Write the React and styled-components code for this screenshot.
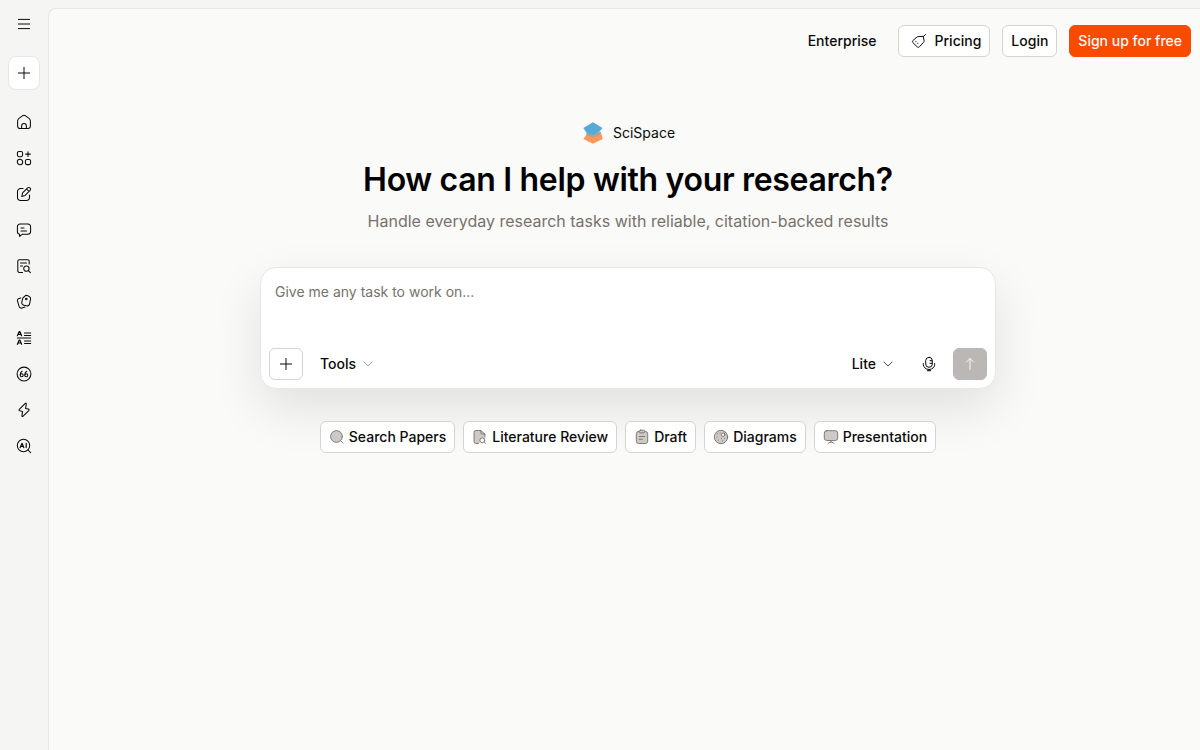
import React from 'react'
import styled, { createGlobalStyle } from 'styled-components'

const GlobalStyle = createGlobalStyle`
	* {
		box-sizing: border-box;
	}
	body {
		margin: 0;
		font-family: Inter, 'Liberation Sans', sans-serif;
		font-size: 14px;
		line-height: 20px;
		color: #0c0a09;
		background: #f5f5f4;
	}
	button {
		font: inherit;
		color: inherit;
		cursor: pointer;
	}
	svg {
		display: block;
		flex: none;
	}
`

const Page = styled.div`
	display: flex;
	height: 100vh;
	overflow: hidden;
`

const Sidebar = styled.nav`
	display: flex;
	flex-direction: column;
	align-items: center;
	width: 48px;
	flex: none;
	padding-top: 8px;
`

const NavButton = styled.button`
	display: flex;
	justify-content: center;
	align-items: center;
	width: 32px;
	height: 32px;
	margin-bottom: 4px;
	padding: 0;
	border: none;
	border-radius: 8px;
	background: transparent;
`

const NewButton = styled(NavButton)`
	height: 34px;
	margin: 12px 0 16px;
	border: 1px solid #e5e7eb;
	background: #fff;
`

const Main = styled.main`
	display: flex;
	flex-direction: column;
	flex: 1;
	margin-top: 8px;
	border: 1px solid #e5e7eb;
	border-width: 1px 0 0 1px;
	border-top-left-radius: 8px;
	background: #fafaf9;
`

const Header = styled.header`
	display: flex;
	justify-content: flex-end;
	align-items: center;
	gap: 12px;
	padding: 16px 9px 0 0;
`

const Button = styled.button`
	display: flex;
	justify-content: center;
	align-items: center;
	gap: ${props => props.$gap || '8px'};
	height: 32px;
	padding: 0 8px;
	border: 1px solid #d6d3d1;
	border-radius: 6px;
	background: #fff;
	font-weight: 500;
	white-space: nowrap;
`

const PlainButton = styled(Button)`
	border-color: transparent;
	background: transparent;
`

const PricingButton = styled(Button)`
	padding-left: 12px;
`

const SignUpButton = styled(Button)`
	border-color: #f84b00;
	background: #f84b00;
	color: #fafaf9;
`

const Hero = styled.section`
	display: flex;
	flex-direction: column;
	align-items: center;
	padding: 64px 0 0 7px;
`

const Brand = styled.div`
	display: flex;
	align-items: center;
	gap: 8px;
	height: 24px;
`

const Title = styled.h1`
	margin: 15px 0 0;
	font-size: 32px;
	line-height: 40px;
	font-weight: 600;
	letter-spacing: -0.01em;
	color: #000;
`

const Subtitle = styled.p`
	margin: 9px 0 0;
	font-size: 16px;
	line-height: 24px;
	color: #78716c;
`

const Prompt = styled.div`
	display: flex;
	flex-direction: column;
	justify-content: space-between;
	width: 736px;
	height: 122px;
	margin-top: 34px;
	padding: 14px 8px 8px;
	border: 1px solid #e5e7eb;
	border-radius: 16px;
	background: #fff;
	box-shadow: 0 20px 50px rgba(0, 0, 0, 0.1);
`

const Placeholder = styled.div`
	padding: 0 6px;
	color: #78716c;
`

const Toolbar = styled.div`
	display: flex;
	align-items: center;
`

const SquareButton = styled(Button)`
	width: 34px;
	padding: 0;
`

const ToolsButton = styled(PlainButton)`
	margin-left: 8px;
`

const VoiceButton = styled(PlainButton)`
	margin: 0 7px;
`

const SubmitButton = styled(SquareButton)`
	border-color: #bbb7b5;
	background: #bbb7b5;
	color: #fafaf9;
`

const Spacer = styled.div`
	flex: 1;
`

const Chips = styled.div`
	display: flex;
	gap: 8px;
	margin-top: 32px;
`

const Icon = ({ size = 16, children, ...rest }) => (
	<svg
		width={size}
		height={size}
		viewBox="0 0 16 16"
		fill="none"
		stroke="currentColor"
		strokeWidth="1"
		strokeLinecap="round"
		strokeLinejoin="round"
		{...rest}
	>
		{children}
	</svg>
)

const ChipIcon = ({ children }) => (
	<Icon stroke="#78716c" strokeWidth="0.9" fill="#cdc9c6">
		{children}
	</Icon>
)

const PlusIcon = () => (
	<Icon>
		<path d="M8 2.4v11.2M2.4 8h11.2" />
	</Icon>
)

const ChevronIcon = ({ color }) => (
	<Icon stroke={color}>
		<path d="m4 6 4 4 4-4" />
	</Icon>
)

const navItems = [
	{
		name: 'Home',
		icon: (
			<>
				<path d="M1.600 7c0-1.200.5-2 1.400-2.700l3.400-2.500c1-.7 2.200-.7 3.200 0L13 4.300c.9.700 1.400 1.500 1.400 2.700v5c0 1.500-1 2.500-2.500 2.500H4.100c-1.500 0-2.500-1-2.500-2.500z" />
				<path d="M5.600 14.400v-2.500a2.400 2.400 0 0 1 4.800 0v2.500" />
			</>
		)
	},
	{
		name: 'Apps',
		icon: (
			<>
				<rect x="1.400" y="1.500" width="5.200" height="5.200" rx="1.600" />
				<circle cx="4" cy="12" r="2.700" />
				<rect x="9.400" y="9.400" width="5.200" height="5.200" rx="1.600" />
				<path d="M12 1.700v4.800M9.600 4.100h4.800" />
			</>
		)
	},
	{
		name: 'Write',
		icon: (
			<>
				<path d="M7 2.500H4.700a3.200 3.200 0 0 0-3.200 3.200v5.600a3.200 3.200 0 0 0 3.200 3.200h5.600a3.200 3.200 0 0 0 3.200-3.200V9" />
				<path d="m6.600 6.900 5-5a1.600 1.600 0 0 1 2.300 0l.2.200a1.600 1.600 0 0 1 0 2.300l-5 5-3.300 1.100zM10.600 3l2.400 2.400" />
			</>
		)
	},
	{
		name: 'Chat',
		icon: (
			<>
				<path d="M4 2h8a2.600 2.600 0 0 1 2.600 2.600v5A2.600 2.600 0 0 1 12 12.200H6.600L3.600 14.400v-2.200A2.500 2.500 0 0 1 1.400 9.600v-5A2.600 2.600 0 0 1 4 2z" />
				<path d="M5 6h3M5 9h5.500" />
			</>
		)
	},
	{
		name: 'Papers',
		icon: (
			<>
				<path d="M6.500 14.400H3.300a1.500 1.500 0 0 1-1.500-1.500V3.200a1.500 1.500 0 0 1 1.500-1.500h8.400a1.500 1.500 0 0 1 1.500 1.500V6" />
				<path d="M4.500 5h6M4.500 8h2" />
				<circle cx="10.400" cy="10.600" r="2.700" />
				<path d="m12.400 12.600 2 2" />
			</>
		)
	},
	{
		name: 'Library',
		icon: (
			<>
				<path d="M9.100 1.900c.7-.6 1.500-.7 2.300-.3l1.700.8c1.100.5 1.700 1.400 1.500 2.500l-1 4.900a2.600 2.600 0 0 1-3.100 2l-2.700-.6a2.600 2.600 0 0 1-2-3.100l1-3.900z" />
				<path d="M4.700 3.900 3 4.400a2.200 2.200 0 0 0-1.500 2.800l1.600 5.200a2.300 2.300 0 0 0 2.900 1.600l3-.9" />
				<circle cx="10.300" cy="5" r=".8" />
			</>
		)
	},
	{
		name: 'Glossary',
		icon: (
			<>
				<path d="m1.400 5.700 1.800-4.200h.6l1.800 4.200M2.200 4.400h2.600M1.400 14.300l1.800-4.200h.6l1.800 4.200M2.200 13h2.600" strokeWidth="1.200" />
				<path d="M8.500 3h6.200M8.500 5.500h6.200M1.300 8h13.400M8.500 10.900h6.200M8.500 13.400h6.200" />
			</>
		)
	},
	{
		name: 'Citations',
		icon: (
			<>
				<circle cx="8" cy="8" r="6.900" />
				<circle cx="5.700" cy="9.200" r="1.500" />
				<circle cx="10.300" cy="9.200" r="1.500" />
				<path d="M4.200 8.900c.1-1.700.8-3 1.900-3.600M8.800 8.900c.1-1.700.8-3 1.900-3.600" />
			</>
		)
	},
	{
		name: 'Automations',
		icon: (
			<path d="M9.300 1.400 3.300 7.300c-.6.600-.3 1.300.5 1.500l2.800.6-.7 4.400c-.1.800.4 1 1 .5l5.900-5.700c.6-.6.3-1.300-.5-1.500l-2.700-.6.700-4.600c.1-.8-.4-1-1-.5z" />
		)
	},
	{
		name: 'AI Detector',
		icon: (
			<>
				<circle cx="7.500" cy="7.500" r="6.200" />
				<path d="m12 12 2.700 2.700" />
				<path d="m4.200 9.600 1.700-4.200h.2l1.700 4.200M4.900 8.400h2.200M10.200 5.400v4.200" strokeWidth="1.200" />
			</>
		)
	}
]

const chips = [
	{
		label: 'Search Papers',
		icon: (
			<>
				<circle cx="7.500" cy="7.500" r="5.900" />
				<path d="m12 12 2.200 2.200" />
			</>
		)
	},
	{
		label: 'Literature Review',
		icon: (
			<>
				<path d="M6.800 14.500H4a2 2 0 0 1-2-2v-9a2 2 0 0 1 2-2h4.800L13 5.200v5z" stroke="none" />
				<path d="M6.500 14.500H4a2 2 0 0 1-2-2v-9a2 2 0 0 1 2-2h4.800L13 5.200v2.600" fill="none" />
				<path d="M8.800 1.600v2.200c0 .8.500 1.300 1.200 1.300h2.800" fill="none" />
				<circle cx="10.300" cy="11.300" r="2.400" fill="#fff" />
				<path d="m12.200 13.100 1.400 1.300" />
			</>
		)
	},
	{
		label: 'Draft',
		icon: (
			<>
				<rect x="2.300" y="2.500" width="11.400" height="12" rx="2.200" />
				<rect x="5.300" y="1.200" width="5.400" height="2.600" rx="1.200" />
				<path d="M5.300 7.500h5.400M5.300 10.300h3" />
			</>
		)
	},
	{
		label: 'Diagrams',
		icon: (
			<>
				<circle cx="8" cy="8" r="6.700" />
				<circle cx="10.100" cy="5.700" r="1.700" fill="#fff" />
				<path d="m11.400 4.400 1.200-1.200M4.500 4.800h.1M7 4.200h.1M4 8h.1M5.200 11h.1M8.300 9.500h.1M11.700 9.500h.1M9.500 12h.1" />
			</>
		)
	},
	{
		label: 'Presentation',
		icon: (
			<>
				<rect x="1.300" y="1.700" width="13.400" height="9.800" rx="2.400" />
				<path d="M8 11.500v1.700M5.200 14.300l2-1.100h1.600l2 1.100" fill="none" />
			</>
		)
	}
]

const Logo = () => (
	<svg width="24" height="24" viewBox="0 0 24 24">
		<defs>
			<linearGradient id="fold" x1="0.200" y1="0" x2="0.500" y2="1">
				<stop offset="0" stopColor="#6fa8c4" />
				<stop offset="1" stopColor="#e09b70" />
			</linearGradient>
		</defs>
		<path d="M20 11.300 21.700 18 12 22.800 2.400 18l3.300-4.700z" fill="#ff9857" />
		<path d="M12 1.200 21.500 6.900 18.300 10.800 12 14.500 6 12.500 2.300 7z" fill="#55abd6" />
		<path d="M5.600 11.500 12 14.300l6.300-3.600 1.700.6-2 3-6 3.200-6.400-3.300z" fill="url(#fold)" />
	</svg>
)

const App = () => {
	return (
		<>
			<GlobalStyle />
			<Page>
				<Sidebar>
					<NavButton aria-label="Menu">
						<Icon>
							<path d="M2.400 3.400h11.200M2.400 8h11.200M2.400 12.600h11.200" />
						</Icon>
					</NavButton>
					<NewButton aria-label="New">
						<PlusIcon />
					</NewButton>
					{navItems.map(item => (
						<NavButton key={item.name} aria-label={item.name}>
							<Icon strokeWidth="1.050">{item.icon}</Icon>
						</NavButton>
					))}
				</Sidebar>
				<Main>
					<Header>
						<PlainButton>Enterprise</PlainButton>
						<PricingButton>
							<Icon>
								<path d="m12.300 3.700.8 3.900c.1.600 0 1.100-.4 1.600l-4.300 4.600c-.7.700-1.500.7-2.200 0l-4.300-4.100c-.7-.7-.7-1.500 0-2.200l4-3.400c.4-.4 1-.5 1.600-.5z" />
								<path d="m12.300 3.700 2.300-2.200M4.800 8.600h.1M6.700 10.400h.1" />
							</Icon>
							Pricing
						</PricingButton>
						<Button>Login</Button>
						<SignUpButton>Sign up for free</SignUpButton>
					</Header>
					<Hero>
						<Brand>
							<Logo />
							SciSpace
						</Brand>
						<Title>How can I help with your research?</Title>
						<Subtitle>
							Handle everyday research tasks with reliable, citation-backed results
						</Subtitle>
						<Prompt>
							<Placeholder>Give me any task to work on...</Placeholder>
							<Toolbar>
								<SquareButton aria-label="Attach">
									<PlusIcon />
								</SquareButton>
								<ToolsButton $gap="4px">
									Tools
									<ChevronIcon color="#a8a29e" />
								</ToolsButton>
								<Spacer />
								<PlainButton $gap="4px">
									Lite
									<ChevronIcon color="#57534e" />
								</PlainButton>
								<VoiceButton aria-label="Voice">
									<Icon>
										<rect x="4.700" y="1.300" width="6.600" height="10" rx="3.300" />
										<path d="M2.300 7.500v.8a5.700 5.200 0 0 0 11.400 0v-.8M8 13.500v1.200M6.300 14.700h3.400M9 4.700h2M9 7.300h2" />
									</Icon>
								</VoiceButton>
								<SubmitButton aria-label="Send">
									<Icon>
										<path d="M8 13.500v-11M4.500 6 8 2.500 11.500 6" />
									</Icon>
								</SubmitButton>
							</Toolbar>
						</Prompt>
						<Chips>
							{chips.map(chip => (
								<Button key={chip.label} $gap="4px">
									<ChipIcon>{chip.icon}</ChipIcon>
									{chip.label}
								</Button>
							))}
						</Chips>
					</Hero>
				</Main>
			</Page>
		</>
	)
}

export default App
